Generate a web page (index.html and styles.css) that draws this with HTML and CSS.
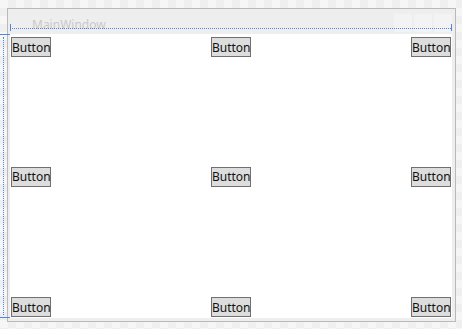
FILE: index.html
```html
<!doctype html>
<html lang="en">
 <head>
  <meta charset="UTF-8">
  <title>MainWindow - Designer</title>
  <link rel="stylesheet" href="styles.css">
 </head>
 <body>
  <div class="canvas">
   <div class="guide guide-top"></div>
   <div class="guide tick-left"></div>
   <div class="guide tick-right"></div>
   <div class="guide mark-top"></div>
   <div class="guide mark-bottom"></div>
   <div class="guide guide-left"></div>

   <div class="window">
    <div class="titlebar">
     <span class="title">MainWindow</span>
     <div class="caption-btns">
      <span></span><span></span><span></span>
     </div>
    </div>
    <div class="content">
     <button class="btn tl">Button</button>
     <button class="btn tc">Button</button>
     <button class="btn tr">Button</button>
     <button class="btn ml">Button</button>
     <button class="btn mc">Button</button>
     <button class="btn mr">Button</button>
     <button class="btn bl">Button</button>
     <button class="btn bc">Button</button>
     <button class="btn br">Button</button>
    </div>
   </div>
  </div>
 </body>
</html>
```

FILE: styles.css
```css
html, body {
  margin: 0;
  height: 100%;
}
body {
  font-family: "Noto Sans", "Open Sans", sans-serif;
  background-color: #f6f6f6;
  background-image:
    linear-gradient(45deg, #efefef 25%, transparent 25%, transparent 75%, #efefef 75%),
    linear-gradient(45deg, #efefef 25%, transparent 25%, transparent 75%, #efefef 75%);
  background-size: 16px 16px;
  background-position: 0 0, 8px 8px;
}
.canvas {
  position: relative;
  padding: 8px 0 0 7px;
}
.window {
  width: 442px;
  height: 309px;
  border: 1px solid #b9b9b9;
  background: #eeeeee;
  padding: 0 3px 3px 2px;
  display: flex;
  flex-direction: column;
}
.titlebar {
  height: 25px;
  display: flex;
  align-items: center;
  justify-content: space-between;
}
.title {
  font-size: 12px;
  color: #c9c9c9;
  margin-left: 22px;
  margin-top: 6px;
}
.caption-btns {
  display: flex;
  gap: 2px;
  margin-top: 2px;
}
.caption-btns span {
  width: 18px;
  height: 18px;
  background: #f3f3f3;
  border-radius: 2px;
}
.content {
  flex: 1;
  background: #ffffff;
  display: grid;
  grid-template-columns: 1fr 1fr 1fr;
  grid-template-rows: 1fr 1fr 1fr;
  padding: 3px 1px 1px;
}
.btn {
  width: 40px;
  height: 20px;
  padding: 0;
  font-family: "Noto Sans", "Open Sans", sans-serif;
  font-size: 12px;
  line-height: 17px;
  color: #111111;
  background: #dddddd;
  border: 1px solid #707070;
  border-radius: 0;
}
.tl, .ml, .bl { justify-self: start; }
.tc, .mc, .bc { justify-self: center; }
.tr, .mr, .br { justify-self: end; }
.tl, .tc, .tr { align-self: start; }
.ml, .mc, .mr { align-self: center; }
.bl, .bc, .br { align-self: end; }

/* designer adorners */
.guide {
  position: absolute;
}
.guide-top {
  left: 10px;
  top: 28px;
  width: 441px;
  border-top: 1px dotted #4f86e0;
}
.tick-left, .tick-right {
  top: 24px;
  width: 1px;
  height: 7px;
  background: #4f86e0;
}
.tick-left { left: 10px; }
.tick-right { left: 451px; }
.mark-top, .mark-bottom {
  left: 0;
  width: 10px;
  height: 1px;
  background: #4f86e0;
}
.mark-top { top: 34px; }
.mark-bottom { top: 317px; }
.guide-left {
  left: 3px;
  top: 37px;
  height: 278px;
  border-left: 1px dotted #4f86e0;
}
```
